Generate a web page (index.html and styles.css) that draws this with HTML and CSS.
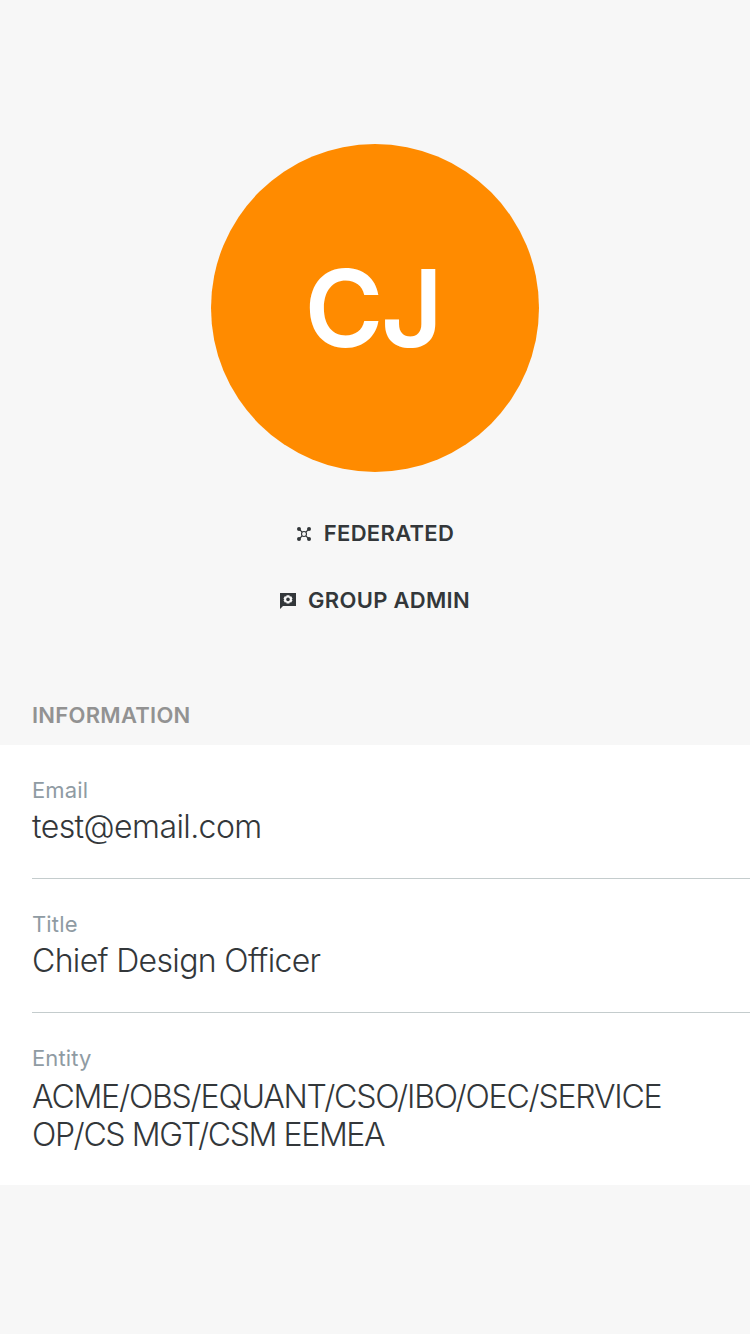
FILE: index.html
```html
<!DOCTYPE html>
<html lang="en">
<head>
<meta charset="utf-8">
<title>Profile</title>
<link rel="stylesheet" href="styles.css">
</head>
<body>
<header class="profile">
  <div class="avatar"><span class="initials">CJ</span></div>
  <div class="badge badge-federated">
    <svg class="icon" viewBox="0 0 16 16"><path d="M3 3l3.200 3.200M13 3L9.800 6.200M3 13l3.200-3.200M13 13L9.800 9.800" stroke="#33373a" stroke-width="1.200"/><circle cx="8" cy="8" r="2.500" fill="none" stroke="#33373a" stroke-width="1.100"/><g fill="#33373a"><circle cx="3" cy="3" r="2"/><circle cx="13" cy="3" r="2"/><circle cx="3" cy="13" r="2"/><circle cx="13" cy="13" r="2"/></g></svg>
    <span class="federated-label">FEDERATED</span>
  </div>
  <div class="badge badge-admin">
    <svg class="icon" viewBox="0 0 16 16"><path fill="#33373a" d="M0 0h16v13H3l-3 3z"/><path d="M6.600 2.300h2.800l.4 1.200 1.400-.2 1.300 2.200-.8.900.8.900-1.300 2.200-1.400-.2-.4 1.200H6.600l-.4-1.200-1.400.2-1.300-2.200.8-.9-.8-.9 1.300-2.200 1.400.2z" fill="#f7f7f7"/><circle cx="8" cy="6.400" r="1.800" fill="#33373a"/></svg>
    <span class="admin-label">GROUP ADMIN</span>
  </div>
</header>
<main>
  <h2 class="section-title"><span>INFORMATION</span></h2>
  <dl class="info">
    <div class="row"><dt>Email</dt><dd><span class="email">test@email.com</span></dd></div>
    <div class="row"><dt>Title</dt><dd><span class="title">Chief Design Officer</span></dd></div>
    <div class="row last"><dt>Entity</dt><dd><span class="entity">ACME/OBS/EQUANT/CSO/IBO/OEC/SERVICE<br><span class="entity-end">OP/CS MGT/CSM EEMEA</span></span></dd></div>
  </dl>
</main>
</body>
</html>
```
FILE: styles.css
```css
* { box-sizing: border-box; }
body { margin: 0; min-height: 1334px; background: #f7f7f7; color: #33373a; font-family: Inter, sans-serif; }
.profile { display: flex; flex-direction: column; align-items: center; padding-top: 144px; height: 689px; }
.avatar { display: flex; align-items: center; justify-content: center; flex: none; width: 328px; height: 328px; border-radius: 50%; background: #ff8b00; color: #fff; }
.initials { padding-right: 5px; font-size: 107px; font-weight: 600; line-height: 130px; letter-spacing: -2.5px; }
.badge { display: flex; align-items: center; gap: 12px; height: 28px; font-size: 22px; font-weight: 580; line-height: 28px; }
.badge span { padding-bottom: 2px; }
.badge-federated { margin-top: 48px; letter-spacing: 0.3px; }
.badge-admin { margin-top: 39px; letter-spacing: 0.3px; }
.icon { display: block; width: 16px; height: 16px; }
.section-title { margin: 0; padding: 12px 32px 0; height: 56px; color: #929292; font-size: 22px; font-weight: 580; line-height: 28px; letter-spacing: 0.27px; }
.info { margin: 0; padding-left: 32px; height: 440px; background: #fff; }
.row { height: 134px; padding-top: 31px; border-bottom: 1px solid #c4cccd; }
.last { height: 172px; border: 0; }
dt { color: #8f9ba3; font-size: 22px; line-height: 28px; letter-spacing: 0.15px; }
dd { margin: 0; padding-top: 4px; font-size: 32px; font-weight: 300; line-height: 38px; white-space: nowrap; }
.last dd { padding-top: 6px; }
.email { letter-spacing: -0.58px; }
.title { letter-spacing: -0.66px; }
.entity { letter-spacing: -1.2px; }
.entity-end { letter-spacing: -1.38px; }
```
